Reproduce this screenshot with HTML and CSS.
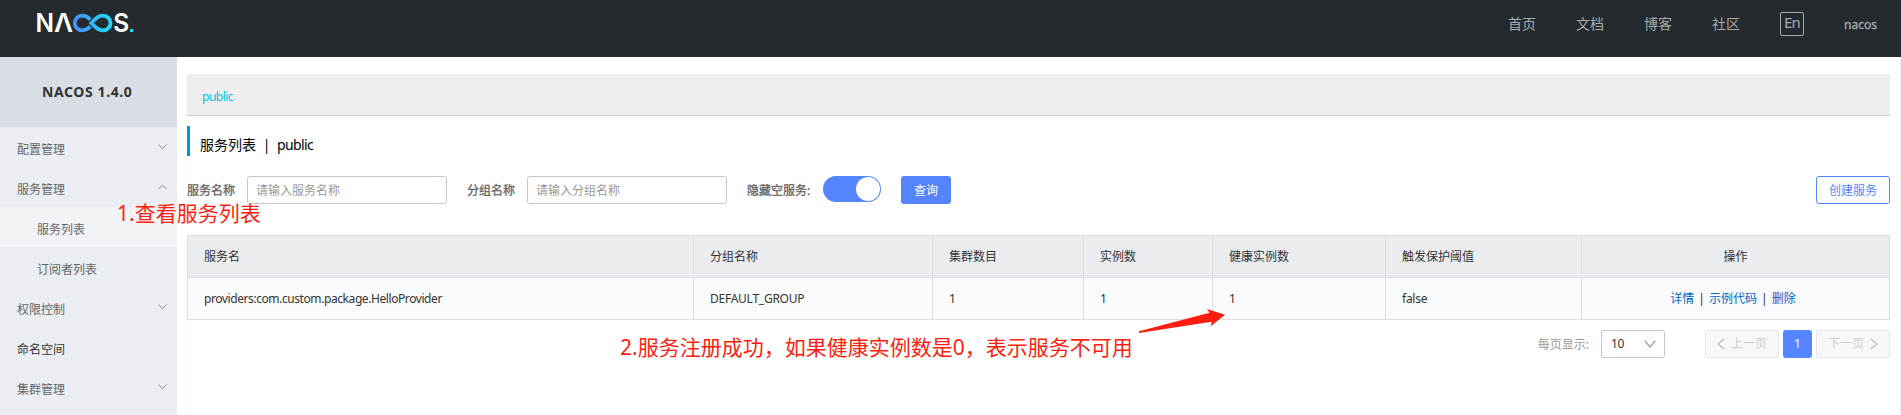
FILE: index.html
```html
<!DOCTYPE html>
<html lang="zh-CN">
<head>
<meta charset="utf-8">
<title>Nacos</title>
<link rel="stylesheet" href="styles.css">
</head>
<body>
<header class="header">
  <svg class="logo" width="106" height="40" viewBox="-4 -8 106 40" role="img" aria-label="NACOS">
    <defs>
      <linearGradient id="loop" gradientUnits="userSpaceOnUse" x1="36" y1="0" x2="76" y2="0">
        <stop offset="0" stop-color="#4a8cff"/><stop offset="1" stop-color="#19e3f5"/>
      </linearGradient>
    </defs>
    <text class="logo-letter" x="-1.500" y="20" textLength="18.500" lengthAdjust="spacingAndGlyphs">N</text>
    <text class="logo-letter" x="17" y="20" textLength="19" lengthAdjust="spacingAndGlyphs">Λ</text>
    <path d="M53.300 7.500C50.500 4.700 48 3.700 45 3.700A7.300 7.300 0 0 0 45 18.300C48 18.300 50.500 17.300 53.300 14.500" fill="none" stroke="url(#loop)" stroke-width="3.800"/>
    <path d="M54.200 11L58.800 6.600C61 4.600 63 3.700 66.200 3.700A7.300 7.300 0 0 1 66.200 18.300C63 18.300 61 17.400 58.800 15.400Z" fill="none" stroke="url(#loop)" stroke-width="3.800"/>
    <text class="logo-letter" x="76.200" y="20" textLength="16" lengthAdjust="spacingAndGlyphs">S</text>
    <rect x="93" y="17" width="3" height="3" fill="#19e3f5"/>
  </svg>
  <nav class="nav">
    <a>首页</a><a>文档</a><a>博客</a><a>社区</a>
    <span class="lang">En</span>
    <span class="user">nacos</span>
  </nav>
</header>
<div class="body">
  <aside class="side">
    <div class="side-title">NACOS 1.4.0</div>
    <ul class="menu">
      <li>配置管理<svg width="9" height="6" viewBox="0 0 9 6"><path d="M.5 .5L4.500 4.500L8.500 .5"/></svg></li>
      <li>服务管理<svg width="9" height="6" viewBox="0 0 9 6"><path d="M.5 5L4.500 1L8.500 5"/></svg></li>
      <li class="sub active">服务列表</li>
      <li class="sub">订阅者列表</li>
      <li>权限控制<svg width="9" height="6" viewBox="0 0 9 6"><path d="M.5 .5L4.500 4.500L8.500 .5"/></svg></li>
      <li class="dark">命名空间</li>
      <li>集群管理<svg width="9" height="6" viewBox="0 0 9 6"><path d="M.5 .5L4.500 4.500L8.500 .5"/></svg></li>
    </ul>
  </aside>
  <main class="main">
    <div class="namespace"><span>public</span></div>
    <h1 class="title"><span>服务列表</span><span class="bar">|</span><span class="name">public</span></h1>
    <form class="filters">
      <label>服务名称</label>
      <div class="input">请输入服务名称</div>
      <label class="second">分组名称</label>
      <div class="input">请输入分组名称</div>
      <label class="hide">隐藏空服务:</label>
      <span class="switch"><i></i></span>
      <span class="btn primary">查询</span>
      <span class="btn outline">创建服务</span>
    </form>
    <table class="table">
      <colgroup><col class="c1"><col class="c2"><col class="c3"><col class="c4"><col class="c5"><col class="c6"><col class="c7"></colgroup>
      <thead><tr><th>服务名</th><th>分组名称</th><th>集群数目</th><th>实例数</th><th>健康实例数</th><th>触发保护阈值</th><th class="center">操作</th></tr></thead>
      <tbody><tr><td><span class="service">providers:com.custom.package.HelloProvider</span></td><td><span class="group">DEFAULT_GROUP</span></td><td>1</td><td>1</td><td>1</td><td><span class="group">false</span></td>
      <td class="center ops"><a>详情</a><i>|</i><a>示例代码</a><i>|</i><a>删除</a></td></tr></tbody>
    </table>
    <div class="pager">
      <span class="pager-label">每页显示:</span>
      <span class="select">10<svg width="12" height="8" viewBox="0 0 12 8"><path d="M.7 .7L6 7L11.300 .7"/></svg></span>
      <span class="page off"><svg width="8" height="12" viewBox="0 0 8 12"><path d="M7.300 .7L1 6L7.300 11.300"/></svg>上一页</span>
      <span class="page current">1</span>
      <span class="page off">下一页<svg width="8" height="12" viewBox="0 0 8 12"><path d="M.7 .7L7 6L.7 11.300"/></svg></span>
    </div>
  </main>
</div>
<div class="note note-one">1.查看服务列表</div>
<div class="note note-two">2.服务注册成功，如果健康实例数是0，表示服务不可用</div>
<svg class="arrow" width="88" height="28" viewBox="0 0 88 28"><path d="M1 23.200L71.500 4.800L69 1L87 6.800L73 18L73.500 13.800L1 25Z"/></svg>
</body>
</html>
```
FILE: styles.css
```css
* { box-sizing: border-box; }
body {
  margin: 0;
  width: 1901px;
  height: 415px;
  overflow: hidden;
  position: relative;
  background: #fff;
  color: #333;
  font: 12px/18px "Noto Sans", "Noto Sans CJK SC", sans-serif;
}
.header {
  height: 57px;
  background: #252a2f;
  display: flex;
  justify-content: space-between;
  padding: 4px 24px 0 33px;
}
.logo-letter { font: 600 25px Inter, sans-serif; fill: #fff; }
.nav {
  display: flex;
  align-items: center;
  height: 24px;
  margin-top: 8px;
  color: #a8aaac;
  font-size: 14px;
}
.nav a { width: 28px; margin-right: 40px; white-space: nowrap; }
.lang {
  width: 24px;
  height: 24px;
  border: 1px solid #a8aaac;
  border-radius: 2px;
  font-size: 15px;
  line-height: 19px;
  text-align: center;
  letter-spacing: -.8px;
}
.user { width: 33px; margin-left: 40px; font-size: 12px; -webkit-text-stroke: .3px; padding-top: 1px; }
.body { display: flex; height: 358px; }
.side { width: 177px; background: #eaedf1; }
.side-title {
  height: 70px;
  background: #d9dde4;
  font-size: 14px;
  font-weight: 700;
  line-height: 70px;
  padding-left: 42px;
  letter-spacing: .6px;
}
.menu { list-style: none; margin: 0; padding: 0; }
.menu li {
  height: 40px;
  line-height: 46px;
  padding: 0 10px 0 17px;
  display: flex;
  justify-content: space-between;
  color: #666;
}
.menu svg { margin-top: 17px; fill: none; stroke: #8a8c90; }
.menu .sub { padding-left: 37px; }
.menu .active { background: #f2f3f7; }
.menu .dark { color: #333; }
.main {
  flex: 1;
  padding: 17px 10px 0;
  border-right: 1px solid #eee;
}
.namespace {
  height: 42px;
  background: #eee;
  border-bottom: 1px solid #ccc;
  padding-left: 15px;
  line-height: 45px;
  color: #00c1de;
  letter-spacing: -.5px;
}
.title {
  margin: 10px 0 0;
  height: 30px;
  border-left: 3px solid #09c;
  padding-left: 10px;
  display: flex;
  color: #000;
  font-size: 14px;
  font-weight: 400;
  line-height: 38px;
}
.title .bar { width: 21px; text-align: center; }
.title .name { letter-spacing: -.6px; }
.filters {
  margin-top: 20px;
  height: 28px;
  display: flex;
  line-height: 30px;
}
.filters label { width: 48px; margin-right: 12px; color: #666; -webkit-text-stroke: .3px; white-space: nowrap; }
.filters .second { margin-left: 20px; }
.filters .hide { margin-left: 20px; width: 64px; }
.input {
  width: 200px;
  border: 1px solid #c4c6cf;
  border-radius: 3px;
  padding-left: 8px;
  line-height: 28px;
  color: #999;
}
.switch {
  width: 58px;
  height: 26px;
  border-radius: 13px;
  background: #5584ff;
  display: flex;
  justify-content: flex-end;
  padding: 1px;
}
.switch i { width: 24px; height: 24px; border-radius: 50%; background: #fff; }
.btn { height: 28px; border-radius: 3px; text-align: center; }
.primary { width: 50px; margin-left: 20px; background: #5584ff; color: #fff; }
.outline { width: 74px; margin-left: auto; border: 1px solid #5584ff; color: #5584ff; line-height: 28px; }
.table {
  margin-top: 31px;
  width: 1703px;
  table-layout: fixed;
  border-collapse: separate;
  border-spacing: 0;
  border-top: 1px solid #dcdee3;
  border-left: 1px solid #dcdee3;
}
.table th, .table td {
  height: 42px;
  padding: 0 16px;
  border-right: 1px solid #dcdee3;
  border-bottom: 1px solid #dcdee3;
  text-align: left;
  font-weight: 400;
  white-space: nowrap;
}
.table th { background: #ebecf0; }
.table td { background: #fafbfd; }
.c1 { width: 506px; }
.c2 { width: 239px; }
.c3 { width: 151px; }
.c4 { width: 129px; }
.c5 { width: 173px; }
.c6 { width: 196px; }
.c7 { width: 308px; }
.service { letter-spacing: -.42px; }
.group { letter-spacing: -.25px; }
.table .center { text-align: center; }
.table .ops { padding-right: 21px; }
.ops a { color: #06c; }
.ops i { font-style: normal; margin: 0 4px; }
.pager {
  margin-top: 10px;
  height: 28px;
  display: flex;
  justify-content: flex-end;
  line-height: 30px;
}
.pager-label { color: #999; margin-right: 12px; }
.select {
  width: 64px;
  margin-right: 40px;
  border: 1px solid #c4c6cf;
  border-radius: 3px;
  padding: 0 8px 0 9px;
  display: flex;
  align-items: center;
  justify-content: space-between;
  letter-spacing: -.4px;
}
.pager svg { fill: none; stroke: #999; stroke-width: 1.2; }
.page {
  width: 74px;
  border-radius: 3px;
  display: flex;
  align-items: center;
  justify-content: center;
  gap: 6px;
}
.pager .off { background: #f7f8fa; border: 1px solid #e6e7eb; color: #ccc; }
.pager .off svg { stroke: #bbb; }
.pager .current { width: 29px; margin: 0 4px; background: #5584ff; color: #fff; }
.note {
  position: absolute;
  color: #ff1e10;
  font-size: 21px;
  line-height: 30px;
  white-space: nowrap;
}
.note-one { left: 117px; top: 198px; }
.note-two { left: 620px; top: 332px; }
.arrow { position: absolute; left: 1138px; top: 308px; fill: #ff1e10; }
```
